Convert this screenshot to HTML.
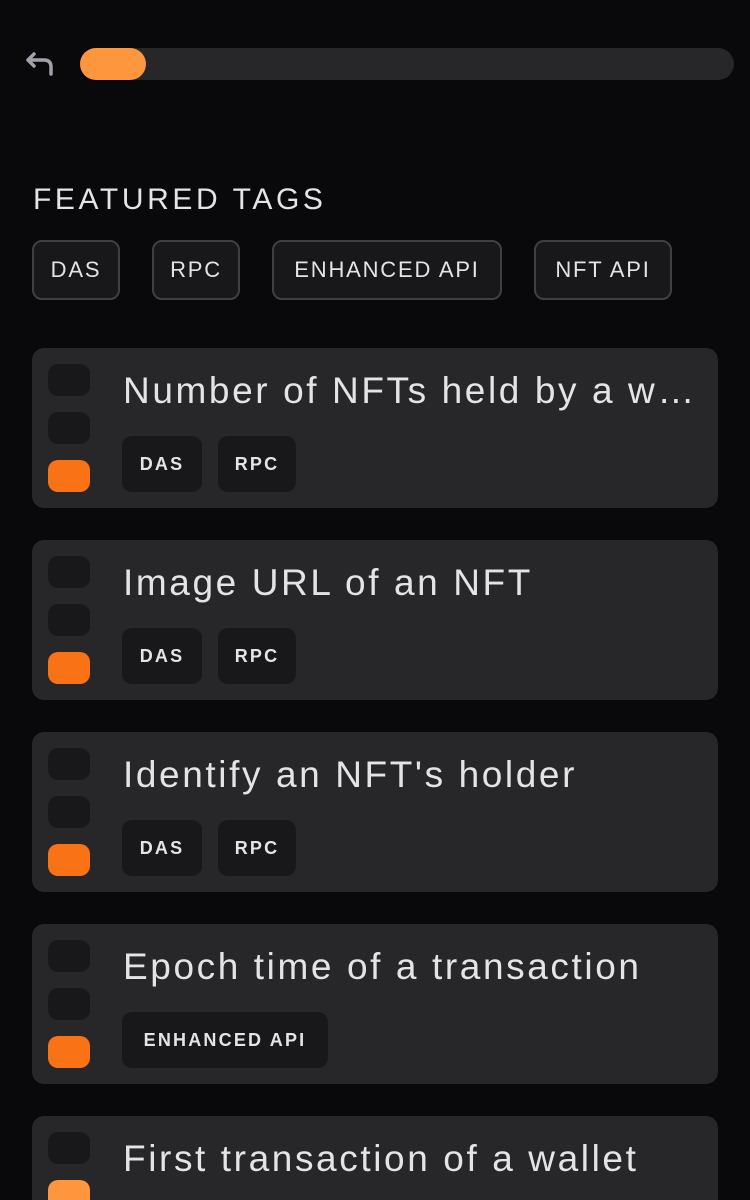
<!DOCTYPE html>
<html style="height:1200px;overflow:hidden"><head><style>
*{margin:0;padding:0;box-sizing:border-box}
body{width:750px;height:1200px;background:#09090b;font-family:"Liberation Sans",sans-serif;color:#e4e4e7;position:relative;overflow:hidden}
.track{position:absolute;left:80px;top:48px;width:654px;height:32px;border-radius:16px;background:#27272a}
.fill{position:absolute;left:0;top:0;width:66px;height:32px;border-radius:16px;background:#fd963c}
h2{position:absolute;left:33px;top:183px;font-size:30px;font-weight:normal;letter-spacing:3.6px;color:#e4e4e7}
.ft{position:absolute;top:240px;height:60px;border:2px solid #3f3f46;background:#18181b;border-radius:10px;font-size:22px;display:flex;align-items:center;justify-content:center;letter-spacing:1.8px}
.card{position:absolute;left:32px;width:686px;height:160px;background:#27272a;border-radius:12px}
.b{position:absolute;left:16px;width:42px;height:32px;border-radius:10px;background:#18181b}
.t{position:absolute;left:91px;top:22px;font-size:37px;letter-spacing:2.6px;white-space:nowrap;color:#e4e4e7}
.tg{position:absolute;top:88px;height:56px;background:#18181b;border-radius:10px;font-size:18px;font-weight:bold;letter-spacing:2.2px;display:flex;align-items:center;justify-content:center;color:#e4e4e7}
</style></head><body>
<svg style="position:absolute;left:24px;top:50px" width="32" height="28" viewBox="0 0 32 28"><path d="M10 4 L4 10 L10 16 M4 10 H20 Q27 10 27 17 V24" fill="none" stroke="#a1a1aa" stroke-width="3.5" stroke-linecap="round" stroke-linejoin="round"/></svg>
<div class="track"><div class="fill"></div></div>
<h2>FEATURED TAGS</h2>
<div class="ft" style="left:32px;width:88px">DAS</div>
<div class="ft" style="left:152px;width:88px">RPC</div>
<div class="ft" style="left:272px;width:230px">ENHANCED API</div>
<div class="ft" style="left:534px;width:138px">NFT API</div>

<div class="card" style="top:348px"><div class="b" style="top:16px"></div><div class="b" style="top:64px"></div><div class="b" style="top:112px;background:#f97316"></div><div class="t">Number of NFTs held by a w…</div><div class="tg" style="left:90px;width:80px">DAS</div><div class="tg" style="left:186px;width:78px">RPC</div></div>
<div class="card" style="top:540px"><div class="b" style="top:16px"></div><div class="b" style="top:64px"></div><div class="b" style="top:112px;background:#f97316"></div><div class="t">Image URL of an NFT</div><div class="tg" style="left:90px;width:80px">DAS</div><div class="tg" style="left:186px;width:78px">RPC</div></div>
<div class="card" style="top:732px"><div class="b" style="top:16px"></div><div class="b" style="top:64px"></div><div class="b" style="top:112px;background:#f97316"></div><div class="t">Identify an NFT's holder</div><div class="tg" style="left:90px;width:80px">DAS</div><div class="tg" style="left:186px;width:78px">RPC</div></div>
<div class="card" style="top:924px"><div class="b" style="top:16px"></div><div class="b" style="top:64px"></div><div class="b" style="top:112px;background:#f97316"></div><div class="t">Epoch time of a transaction</div><div class="tg" style="left:90px;width:206px">ENHANCED API</div></div>
<div class="card" style="top:1116px;height:84px;border-radius:12px 12px 0 0"><div class="b" style="top:16px"></div><div class="b" style="top:64px;background:#fd963c"></div><div class="t">First transaction of a wallet</div></div>
</body></html>
